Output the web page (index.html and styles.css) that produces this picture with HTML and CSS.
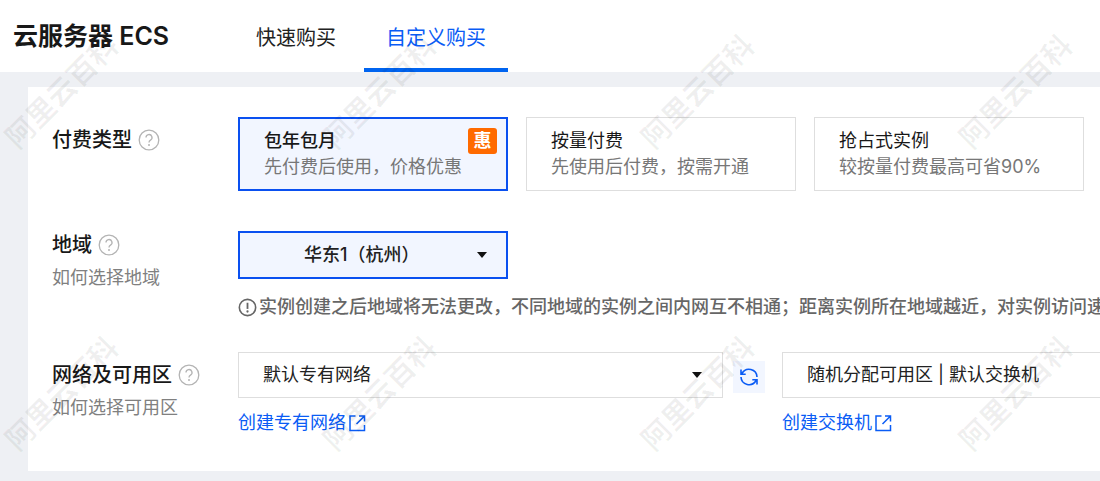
FILE: index.html
```html
<!DOCTYPE html>
<html lang="zh-CN">
<head>
<meta charset="utf-8">
<meta name="viewport" content="width=device-width, initial-scale=1">
<title>云服务器 ECS</title>
<link rel="stylesheet" href="styles.css">
</head>
<body>
<svg class="sprite" aria-hidden="true">
  <symbol id="help" viewBox="0 0 22 22">
    <circle cx="11" cy="11" r="9.8" fill="none" stroke="currentColor" stroke-width="1.3"/>
    <path d="M8 8.600a3 3 0 1 1 4.500 2.500c-1 .6-1.500 1-1.500 2.400" fill="none" stroke="currentColor" stroke-width="1.3"/>
    <circle cx="11" cy="16" r="1" fill="currentColor"/>
  </symbol>
  <symbol id="external" viewBox="0 0 18 18">
    <path d="M7.500 2H2v14.500h14.500V11M11 2h5.500v5.500M16.500 2L8.500 10" fill="none" stroke="currentColor" stroke-width="1.500"/>
  </symbol>
</svg>

<header class="topbar">
  <h1 class="title">云服务器 ECS</h1>
  <nav class="tabs">
    <a class="tab" href="#quick">快速购买</a>
    <a class="tab tab-active" href="#custom" aria-current="page">自定义购买</a>
  </nav>
</header>

<main class="panel">
  <section class="row">
    <div class="row-label row-label-inset">
      <h2 class="label" id="pay-label">付费类型 <svg class="help"><use href="#help"/></svg></h2>
    </div>
    <div class="row-body plans" role="radiogroup" aria-labelledby="pay-label">
      <label class="plan plan-selected">
        <input class="plan-input" type="radio" name="plan" checked>
        <span class="plan-name">包年包月</span>
        <span class="plan-desc">先付费后使用，价格优惠</span>
        <span class="badge">惠</span>
      </label>
      <label class="plan">
        <input class="plan-input" type="radio" name="plan">
        <span class="plan-name">按量付费</span>
        <span class="plan-desc">先使用后付费，按需开通</span>
      </label>
      <label class="plan">
        <input class="plan-input" type="radio" name="plan">
        <span class="plan-name">抢占式实例</span>
        <span class="plan-desc">较按量付费最高可省90%</span>
      </label>
    </div>
  </section>

  <section class="row">
    <div class="row-label">
      <h2 class="label"><label for="region">地域</label> <svg class="help"><use href="#help"/></svg></h2>
      <a class="hint" href="#region-help">如何选择地域</a>
    </div>
    <div class="row-body">
      <div class="select-box region-box">
        <select class="select select-region" id="region"><option>华东1（杭州）</option></select>
        <svg class="caret" viewBox="0 0 10 6"><path d="M0 0h10L5 6z" fill="currentColor"/></svg>
      </div>
      <p class="notice">
        <svg class="notice-icon" viewBox="0 0 20 20"><circle cx="10" cy="10" r="8.600" fill="none" stroke="currentColor" stroke-width="1.700"/><path d="M10 5v6.500" stroke="currentColor" stroke-width="1.900"/><circle cx="10" cy="14.200" r="1.200" fill="currentColor"/></svg>
        <span>实例创建之后地域将无法更改，不同地域的实例之间内网互不相通；距离实例所在地域越近，对实例访问速度</span>
      </p>
    </div>
  </section>

  <section class="row">
    <div class="row-label row-label-inset">
      <h2 class="label"><label for="network">网络及可用区</label> <svg class="help"><use href="#help"/></svg></h2>
      <a class="hint" href="#zone-help">如何选择可用区</a>
    </div>
    <div class="row-body network">
      <div class="field">
        <div class="select-box">
          <select class="select" id="network"><option>默认专有网络</option></select>
          <svg class="caret" viewBox="0 0 10 6"><path d="M0 0h10L5 6z" fill="currentColor"/></svg>
        </div>
        <a class="link" href="#vpc">创建专有网络<svg class="link-icon"><use href="#external"/></svg></a>
      </div>
      <button class="refresh" type="button" aria-label="刷新">
        <svg class="refresh-icon" viewBox="0 0 20 20" fill="none" stroke="currentColor" stroke-width="1.600"><path d="M3 6.500A8 8 0 0 1 18 10M17 13.500A8 8 0 0 1 2 10M2 2.500v4.700H6.700M18 17.500v-4.700H13.300"/></svg>
      </button>
      <div class="field">
        <div class="select-box">
          <select class="select" aria-label="交换机"><option>随机分配可用区 | 默认交换机</option></select>
        </div>
        <a class="link" href="#vswitch">创建交换机<svg class="link-icon"><use href="#external"/></svg></a>
      </div>
    </div>
  </section>
</main>

<div class="watermarks" aria-hidden="true">
  <div class="mark-row"><span class="mark">阿里云百科</span><span class="mark">阿里云百科</span><span class="mark">阿里云百科</span><span class="mark">阿里云百科</span></div>
  <div class="mark-row"><span class="mark">阿里云百科</span><span class="mark">阿里云百科</span><span class="mark">阿里云百科</span><span class="mark">阿里云百科</span></div>
</div>
</body>
</html>
```
FILE: styles.css
```css
* {
  box-sizing: border-box;
}

body {
  position: relative;
  margin: 0;
  padding-bottom: 10px;
  overflow-x: hidden;
  background: #eef0f4;
  color: #181818;
  font: 18px/26px Inter, "Noto Sans CJK SC", sans-serif;
}

.sprite {
  position: absolute;
  width: 0;
  height: 0;
}

.topbar {
  display: flex;
  height: 72px;
  padding-left: 13px;
  background: #fff;
}

.title {
  width: 221px;
  margin: 0;
  font-size: 25px;
  font-weight: 600;
  line-height: 72px;
  white-space: nowrap;
}

.tabs {
  display: flex;
  gap: 6px;
}

.tab {
  padding: 0 22px;
  border-bottom: 4px solid transparent;
  color: #222;
  font-size: 20px;
  line-height: 76px;
  text-decoration: none;
  white-space: nowrap;
  height: 72px;
}

.tab-active {
  border-color: #0064f0;
  color: #0a5cf5;
}

.panel {
  display: flex;
  flex-direction: column;
  gap: 32px;
  margin: 15px 0 0 28px;
  padding: 30px 0 35px 24px;
  overflow: hidden;
  background: #fff;
}

.row {
  display: flex;
}

.row-label {
  flex: 0 0 186px;
}

.row-label-inset {
  padding-top: 9px;
}

.row-body {
  flex: 1;
  min-width: 0;
}

.label {
  display: flex;
  align-items: center;
  gap: 6px;
  margin: 0;
  font-size: 20px;
  font-weight: 500;
  line-height: 28px;
  white-space: nowrap;
}

.help {
  width: 22px;
  height: 22px;
  color: #b4b4b4;
}

.hint {
  display: block;
  margin-top: 6px;
  color: #808080;
  text-decoration: none;
  white-space: nowrap;
}

.plans {
  display: flex;
  gap: 18px;
  margin-bottom: 8px;
}

.plan {
  position: relative;
  display: flex;
  flex: 0 0 270px;
  flex-direction: column;
  padding: 10px 24px;
  border: 1px solid #dedede;
  white-space: nowrap;
}

.plan-selected {
  padding: 9px 24px;
  border: 2px solid #0a50f0;
  background: #f2f6ff;
}

.plan-selected .plan-name {
  font-weight: 500;
}

.plan-input {
  position: absolute;
  margin: 0;
  opacity: 0;
}

.plan-desc {
  color: #777;
}

.badge {
  position: absolute;
  top: 9px;
  right: 9px;
  width: 29px;
  border-radius: 3px;
  background: #ff6a00;
  color: #fff;
  font-weight: 700;
  text-align: center;
}

.select-box {
  position: relative;
}

.region-box {
  max-width: 270px;
}

.select {
  display: block;
  width: 100%;
  height: 46px;
  padding: 0 24px;
  border: 1px solid #dedede;
  border-radius: 0;
  appearance: none;
  background: transparent;
  color: #222;
  font: inherit;
}

.select-region {
  height: 48px;
  padding-left: 64px;
  border: 2px solid #0a50f0;
  background: #f2f6ff;
  font-weight: 500;
}

.caret {
  position: absolute;
  top: 50%;
  right: 21px;
  width: 10px;
  height: 6px;
  margin-top: -3px;
  color: #111;
}

.notice {
  display: flex;
  align-items: center;
  gap: 2px;
  margin: 15px 0 0;
  color: #666;
  font-weight: 500;
  white-space: nowrap;
}

.notice-icon {
  flex: none;
  width: 19px;
  height: 19px;
}

.network {
  display: flex;
}

.field {
  flex: 0 0 485px;
}

.link {
  display: flex;
  align-items: center;
  gap: 2px;
  margin-top: 12px;
  color: #0a5cf5;
  text-decoration: none;
}

.link-icon {
  width: 18px;
  height: 18px;
}

.refresh {
  display: grid;
  flex: none;
  place-items: center;
  width: 32px;
  height: 32px;
  margin: 9px 17px 0 10px;
  padding: 0;
  border: 0;
  background: #f2f6ff;
  color: #0a5cf5;
}

.refresh-icon {
  width: 20px;
  height: 20px;
}

.watermarks {
  position: absolute;
  inset: 0;
  display: flex;
  flex-direction: column;
  gap: 178px;
  padding-top: 30px;
  overflow: hidden;
  color: rgba(0, 0, 0, 0.06);
  font-size: 29px;
  font-weight: 700;
  pointer-events: none;
}

.mark-row {
  display: flex;
  gap: 194px;
}

.mark {
  display: flex;
  flex: 0 0 124px;
  align-items: center;
  justify-content: center;
  min-width: 0;
  height: 124px;
  transform: rotate(-45deg);
  white-space: nowrap;
}
```
